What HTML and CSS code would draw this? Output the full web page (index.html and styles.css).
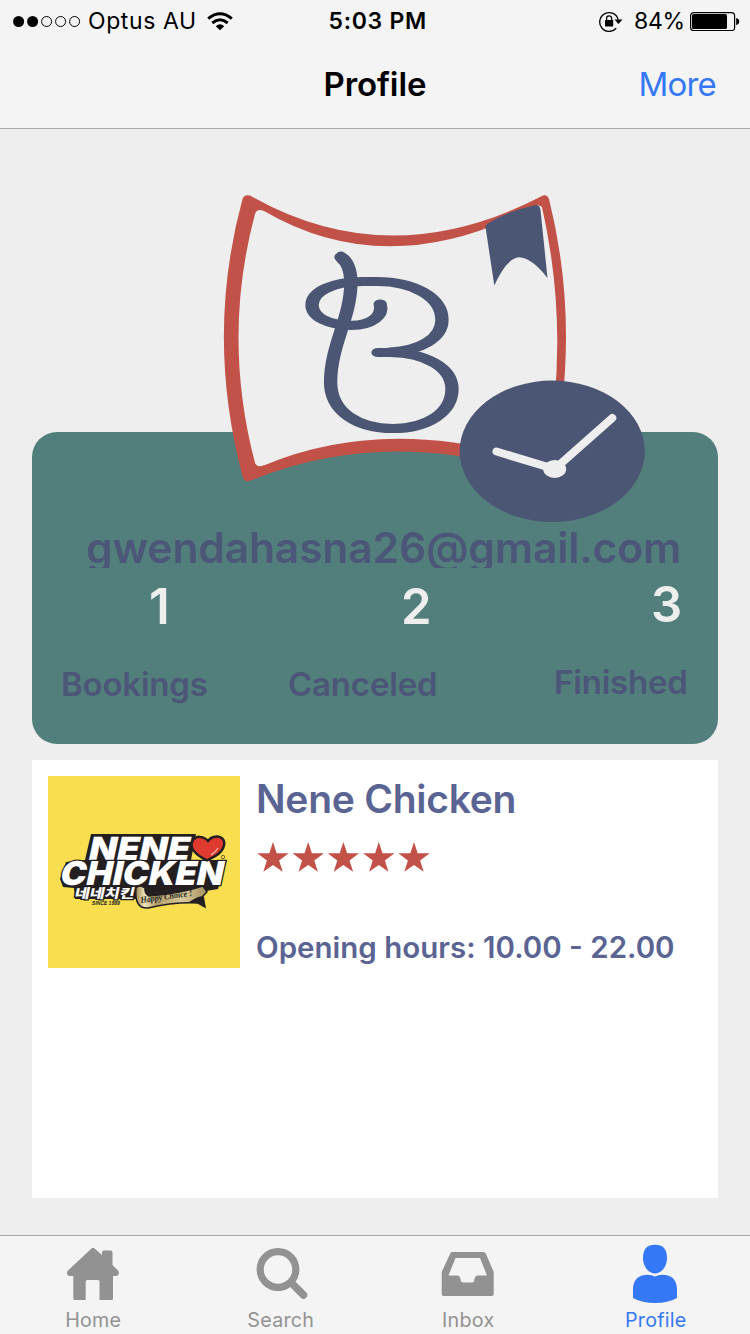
FILE: index.html
```html
<!DOCTYPE html>
<html lang="en">
<head>
<meta charset="utf-8">
<title>Profile</title>
<link rel="stylesheet" href="styles.css">
</head>
<body>
<div class="screen">
  <header class="top">
    <div class="status">
      <div class="status-left">
        <svg class="signal" width="68" height="12" viewBox="0 0 68 12">
          <circle cx="5.6" cy="6.500" r="5.500"/><circle cx="19.6" cy="6.500" r="5.500"/>
          <g fill="none" stroke="#000" stroke-width="1"><circle cx="33.6" cy="6.500" r="5"/><circle cx="47.6" cy="6.500" r="5"/><circle cx="61.6" cy="6.500" r="5"/></g>
        </svg>
        <span class="carrier">Optus AU</span>
        <svg class="wifi" width="26" height="19" viewBox="0 0 26 19">
          <g fill="none" stroke="#000" stroke-width="3"><path d="M1.2 6.6Q13-3 24.8 6.6"/><path d="M5.3 11Q13 4.6 20.7 11"/></g>
          <path d="M8.8 14.2Q13 10.4 17.2 14.2L13 18.3Z"/>
        </svg>
      </div>
      <span class="time">5:03 PM</span>
      <div class="status-right">
        <svg class="lock" width="24" height="21" viewBox="0 0 24 21">
          <path d="M17.2 17.2A9.4 9.4 0 1 1 19.2 8.5" fill="none" stroke="#000" stroke-width="1.3"/>
          <path d="M15.5 8.6h8L19.4 13Z"/><rect x="6" y="9" width="8.2" height="6.4" rx=".6"/>
          <path d="M7.6 9V7.3a2.5 2.5 0 0 1 5 0V9" fill="none" stroke="#000" stroke-width="1.3"/>
        </svg>
        <span class="percent">84%</span>
        <svg class="battery" width="50" height="20" viewBox="0 0 50 20">
          <rect x=".6" y="1.600" width="44" height="18" rx="3.2" fill="none" stroke="#000" stroke-width="1.2"/>
          <rect x="2" y="3.100" width="35" height="15" rx="1.6"/><path d="M46.2 7q3 .8 3 3.6t-3 3.6z"/>
        </svg>
      </div>
    </div>
    <nav class="navbar">
      <h1 class="title">Profile</h1>
      <a class="more">More</a>
    </nav>
  </header>

  <main class="content">
    <section class="card">
      <svg class="brand" width="424" height="330" viewBox="223 194 424 330">
        <path fill="#c25147" d="M242.500 199Q244 194 250 195.500Q390 275.500 543 195.500Q547 194 549 199Q583 335 549 478Q390 424 252 480Q245 483 243 478Q205 337 242.500 199Z"/>
        <path fill="#eee" d="M255 214Q257 208 264 211Q390 284.500 538 205L542 207Q571 335 545 464Q390 413 265 465Q257 468 255 463Q222 337 255 214Z"/>
        <path fill="#4b5674" d="M485.500 227Q485.300 225 488 223.500Q508 211 535 205.200Q539.500 204 540.500 210L547.500 278Q532 258 519 257.300Q507 258 494.300 285.500Z"/>
        <g transform="scale(1.45 1)" fill="none" stroke="#4b5674" stroke-width="9.200" stroke-linecap="round" stroke-linejoin="round">
          <path d="M235.200 257C239 259.500 242 270 242 282C242 318 228 345 228 382C228 412 246.900 428.500 271 428.500C295.200 428.500 311.700 412 311.700 389C311.700 368 294 353 269 352.500H260.700"/>
          <path d="M269 352C290 350.500 304.800 338 304.800 320C304.800 297 285 281.500 260 281.500H250C229 281.500 215.200 292 215.200 305C215.200 317 226.500 325.300 242.500 325.300C256 325.300 264.500 316 262.200 304"/>
        </g>
        <path d="M341 257.500C347 262 350.500 271 350.500 282" fill="none" stroke="#4b5674" stroke-width="12" stroke-linecap="round"/>
        <ellipse cx="552.200" cy="451.300" rx="92.600" ry="70.700" fill="#4b5674"/>
        <path d="M496.500 451.500L554.700 469L612.300 418" fill="none" stroke="#eee" stroke-width="8" stroke-linecap="round"/>
        <ellipse cx="554.700" cy="469" rx="11.500" ry="9" fill="#eee"/>
      </svg>
      <p class="email">gwendahasna26@gmail.com</p>
      <div class="stats">
        <div class="stat bookings"><strong>1</strong><span>Bookings</span></div>
        <div class="stat canceled"><strong>2</strong><span>Canceled</span></div>
        <div class="stat finished"><strong>3</strong><span>Finished</span></div>
      </div>
    </section>

    <section class="list">
      <article class="place">
        <svg class="place-logo" width="192" height="192" viewBox="0 0 192 192">
          <defs><linearGradient id="ribbon"><stop offset="0" stop-color="#9c8450"/><stop offset=".12" stop-color="#efe4bb"/><stop offset=".3" stop-color="#b39d69"/><stop offset=".65" stop-color="#d9cb9c"/><stop offset="1" stop-color="#a58e5c"/></linearGradient></defs>
          <rect width="192" height="192" fill="#f9df4f"/>
          <path fill="#231f20" d="M43 58H148L143 84H179L170 113L140 118L88 123L27 123L26 112L15 111L12 103L18 86L37 84Z"/>
          <g class="logo-type" transform="skewX(-12)">
            <text class="logo-latin" x="57" y="84" font-size="32" textLength="101" lengthAdjust="spacingAndGlyphs">NENE</text>
            <text class="logo-latin" x="34" y="109.500" font-size="33" textLength="163" lengthAdjust="spacingAndGlyphs">CHICKEN</text>
            <text class="logo-korean" x="52" y="122" font-size="13" textLength="60" lengthAdjust="spacingAndGlyphs">네네치킨</text>
            <text class="logo-since" x="71" y="129" textLength="28" lengthAdjust="spacingAndGlyphs">SINCE 1999</text>
          </g>
          <path d="M159 83C147 77 144 72 145 67C147 60 156 61 160 67C165 59 175 61 175 67C175 75 167 79 159 83Z" fill="#df3a2f" stroke="#231f20" stroke-width="5" paint-order="stroke"/>
          <path d="M170 72q-2 4-7 7" fill="none" stroke="#f7a59a" stroke-width="1.500"/>
          <circle cx="175" cy="81" r="1.700" fill="none" stroke="#57491f" stroke-width=".8"/>
          <path d="M88 112Q91 108 97 112Q96 117 101 120Q130 118 155 110L159 116L155 120L157 131L150 127Q125 126 100 132Q86 133 88 112Z" fill="url(#ribbon)" stroke="#231f20" stroke-width="1.500"/>
          <path d="M141 126Q150 120 155 120L157 131L150 127Z" fill="#231f20"/>
          <text class="logo-tagline" transform="translate(93 127) rotate(-8)" textLength="52" lengthAdjust="spacingAndGlyphs">Happy Choice !</text>
        </svg>
        <div class="place-info">
          <h2 class="place-name">Nene Chicken</h2>
          <svg class="stars" width="174" height="31" viewBox="0 0 174 31">
            <defs><path id="star" d="M16 0L19.700 11.300H31.700L22.100 18.400L25.700 29.800L16 22.900L6.300 29.800L9.900 18.400L.3 11.300H12.300Z"/></defs>
            <use href="#star"/><use href="#star" x="35.200"/><use href="#star" x="70.400"/><use href="#star" x="105.800"/><use href="#star" x="141"/>
          </svg>
          <p class="hours">Opening hours: 10.00 - 22.00</p>
        </div>
      </article>
    </section>
  </main>

  <nav class="tabs">
    <a class="tab">
      <svg width="56" height="60" viewBox="65 1243 56 60"><path d="M92 1248Q93 1247.500 94.500 1248.500L102 1255V1252Q102 1250.500 104 1250.500H110.500Q112.500 1250.500 112.500 1252.500V1265L118.500 1271Q120 1275.500 116.500 1276H113V1298.500Q113 1300 111.500 1300H99.500V1281.500Q99.500 1280 98 1280H87Q85.700 1280 85.700 1281.500V1300H75Q73.300 1300 73.300 1298.500V1276H70Q65.500 1275 67.500 1271Z"/></svg>
      <span>Home</span>
    </a>
    <a class="tab">
      <svg width="56" height="60" viewBox="253 1243 56 60"><g fill="none" stroke="#929292"><circle cx="278" cy="1269.500" r="17.800" stroke-width="7.200"/><path d="M291.500 1283L303.500 1295" stroke-width="7.500" stroke-linecap="round"/></g></svg>
      <span>Search</span>
    </a>
    <a class="tab">
      <svg width="56" height="60" viewBox="440 1243 56 60"><path fill-rule="evenodd" d="M452 1252H483Q485 1252 486 1254L493.700 1272V1294Q493.700 1296 492 1296H443.500Q441.700 1296 441.700 1294V1272L450 1254Q450.700 1252 452 1252ZM455.500 1258L448.500 1275.500H458Q460 1276 460.500 1279Q461 1282.500 463 1282.500H472.500Q474 1282.500 474.500 1279Q475 1276 477 1275.500H487L480 1258Z"/></svg>
      <span>Inbox</span>
    </a>
    <a class="tab active">
      <svg width="56" height="60" viewBox="628 1243 56 60"><path d="M655 1244.700C663 1244.700 667 1249 667 1258C667 1267 661 1273.500 655 1273.500C649 1273.500 643 1267 643 1258C643 1249 647 1244.700 655 1244.700Z"/><path d="M645 1275Q650 1274 655 1276.500Q660 1274 665 1275C674 1276 677 1282 677 1290V1298Q668 1303 655 1303Q642 1303 633 1298V1290C633 1282 636 1276 645 1275Z"/></svg>
      <span>Profile</span>
    </a>
  </nav>
</div>
</body>
</html>
```
FILE: styles.css
```css
* { box-sizing: border-box; }
body { margin: 0; font-family: Inter, "Liberation Sans", sans-serif; background: #eee; }
h1, h2, p { margin: 0; }
svg { display: block; flex: none; }

.screen { width: 750px; height: 1334px; display: flex; flex-direction: column; overflow: hidden; }

.top { height: 129px; background: #f4f4f4; border-bottom: 1px solid #a7a7a7; }
.status { height: 40px; display: grid; grid-template-columns: 328.5px 98.5px 1fr; align-items: center; font-size: 23px; line-height: 42px; white-space: nowrap; }
.status-left, .status-right { display: flex; align-items: center; height: 40px; }
.status-left { padding-left: 13px; }
.carrier { width: 107px; margin: 0 12px 0 7px; letter-spacing: 0.6px; }
.time { font-weight: 600; letter-spacing: 0.7px; }
.status-right { padding-left: 172px; }
.percent { width: 50px; margin: 0 6px 0 11px; letter-spacing: -0.3px; }

.navbar { height: 88px; display: grid; grid-template-columns: 323.5px 1fr auto; align-items: center; padding-right: 34px; white-space: nowrap; }
.title { grid-column: 2; font-size: 33px; font-weight: 600; line-height: 88px; letter-spacing: -0.1px; }
.more { font-size: 33px; line-height: 88px; color: #3478f6; letter-spacing: -0.8px; }

.content { flex: 1; padding: 303px 32px 0; }
.card { position: relative; height: 312px; padding-top: 89px; border-radius: 25px; background: #527f7b; color: #4b5678; }
.brand { position: absolute; left: 191px; top: -238px; }
.email { height: 47px; overflow: hidden; padding-left: 54px; font-size: 42.5px; line-height: 54px; font-weight: 600; white-space: nowrap; letter-spacing: -0.12px; }
.stats { display: grid; grid-template-columns: 227px 266px auto; padding-left: 29px; }
.stat { display: flex; flex-direction: column; font-weight: 600; }
.stat strong { font-size: 49px; line-height: 78px; font-weight: 600; color: #eee; }
.stat span { font-size: 33px; line-height: 76px; white-space: nowrap; letter-spacing: -0.2px; }
.bookings strong { padding-left: 88px; }
.canceled strong { padding-left: 113px; }
.finished strong { padding-left: 97px; }
.finished { margin-top: -2px; }

.list { height: 438px; margin-top: 16px; padding: 16px; background: #fff; }
.place { display: flex; gap: 16px; color: #5a6493; }
.place-info { display: flex; flex-direction: column; white-space: nowrap; }
.place-name { font-size: 39px; line-height: 46px; font-weight: 600; letter-spacing: -0.25px; }
.stars { margin: 20px 0 0 1px; fill: #c25147; }
.hours { margin-top: 51px; font-size: 29.5px; line-height: 46px; font-weight: 600; }

.logo-latin { font-family: Inter, sans-serif; font-weight: 900; fill: #fff; stroke: #231f20; stroke-width: 2.5px; paint-order: stroke; }
.logo-korean { font-family: "Noto Sans CJK KR", sans-serif; font-weight: 900; fill: #fff; stroke: #231f20; stroke-width: 2.5px; paint-order: stroke; }
.logo-since { font-family: "Liberation Sans", sans-serif; font-size: 6px; font-weight: 700; fill: #231f20; }
.logo-tagline { font-family: "Liberation Serif", serif; font-size: 9px; font-style: italic; font-weight: 700; fill: #231f20; }

.tabs { height: 99px; display: grid; grid-template-columns: repeat(4, 1fr); background: #f4f4f4; border-top: 1px solid #a7a7a7; }
.tab { display: flex; flex-direction: column; align-items: center; padding-top: 7px; color: #929292; fill: #929292; font-size: 19.7px; line-height: 34px; letter-spacing: 0.25px; }
.tab svg, .tab span { margin-right: 1px; }
.active { color: #3478f6; fill: #3478f6; }
```
